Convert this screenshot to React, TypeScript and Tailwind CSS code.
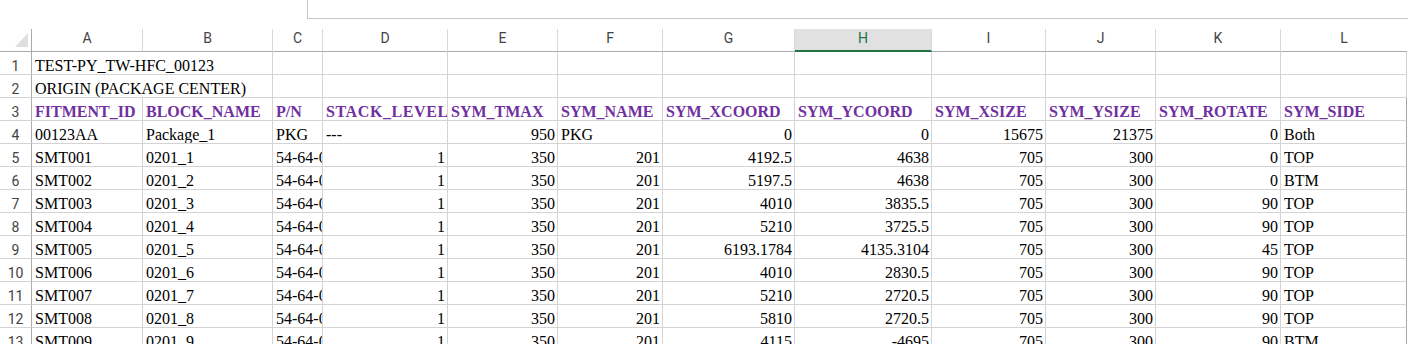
const COLS = ['A', 'B', 'C', 'D', 'E', 'F', 'G', 'H', 'I', 'J', 'K', 'L']

type Cell = { v: string; num?: boolean; span?: boolean; wide?: boolean }

const t = (v: string): Cell => ({ v })
const n = (v: string): Cell => ({ v, num: true })

const HEADERS = [
  'FITMENT_ID',
  'BLOCK_NAME',
  'P/N',
  'STACK_LEVEL',
  'SYM_TMAX',
  'SYM_NAME',
  'SYM_XCOORD',
  'SYM_YCOORD',
  'SYM_XSIZE',
  'SYM_YSIZE',
  'SYM_ROTATE',
  'SYM_SIDE',
]

const smt = (i: number, x: string, y: string, rot: string, side: string): Cell[] => [
  t(`SMT00${i}`),
  t(`0201_${i}`),
  t('54-64-0001'),
  n('1'),
  n('350'),
  n('201'),
  n(x),
  n(y),
  n('705'),
  n('300'),
  n(rot),
  t(side),
]

const ROWS: Cell[][] = [
  [{ v: 'TEST-PY_TW-HFC_00123', span: true }, ...Array(10).fill(t(''))],
  [{ v: 'ORIGIN (PACKAGE CENTER)', span: true }, ...Array(10).fill(t(''))],
  // STACK_LEVEL is a touch wider in the original font, so it gets clipped
  HEADERS.map((h) => ({ v: h, wide: h === 'STACK_LEVEL' })),
  [
    t('00123AA'),
    t('Package_1'),
    t('PKG'),
    t('---'),
    n('950'),
    t('PKG'),
    n('0'),
    n('0'),
    n('15675'),
    n('21375'),
    n('0'),
    t('Both'),
  ],
  smt(1, '4192.5', '4638', '0', 'TOP'),
  smt(2, '5197.5', '4638', '0', 'BTM'),
  smt(3, '4010', '3835.5', '90', 'TOP'),
  smt(4, '5210', '3725.5', '90', 'TOP'),
  smt(5, '6193.1784', '4135.3104', '45', 'TOP'),
  smt(6, '4010', '2830.5', '90', 'TOP'),
  smt(7, '5210', '2720.5', '90', 'TOP'),
  smt(8, '5810', '2720.5', '90', 'TOP'),
  smt(9, '4115', '-4695', '90', 'BTM'),
]

export default function App() {
  return (
    <div className="w-[1409px] h-[344px] overflow-hidden bg-white">
      {/* formula bar edge */}
      <div className="h-[29px]">
        <div className="ml-[307px] mr-[1px] h-[19px] border-l border-b border-[#c6c6c6]" />
      </div>

      <div className="grid grid-cols-[32px_111px_130px_50px_125px_110px_105px_132px_137px_114px_110px_125px_126px] font-['Liberation_Serif',serif] text-[16px] text-black">
        {/* select all corner */}
        <div className="h-[23px] border-b border-r border-[#ababab] flex justify-end items-end pr-[3px] pb-[4px]">
          <svg width="13" height="14" viewBox="0 0 13 14">
            <polygon points="13,0 13,14 0,14" fill="#dfdfdf" />
          </svg>
        </div>

        {COLS.map((c, i) => {
          const sel = c === 'H'
          return (
            <div
              key={c}
              className={
                'h-[23px] flex items-center justify-center pb-[3px] font-["Roboto",sans-serif] text-[14px] ' +
                (sel
                  ? 'bg-[#e1e1e1] text-[#217346] border-b-2 border-b-[#217346]'
                  : 'text-[#444] border-b border-b-[#ababab]') +
                (i < COLS.length - 1 ? ' border-r border-r-[#d9d9d9]' : '')
              }
            >
              {c}
            </div>
          )
        })}

        {ROWS.map((row, r) => (
          <Row key={r} index={r + 1} cells={row} />
        ))}
      </div>
    </div>
  )
}

function Row({ index, cells }: { index: number; cells: Cell[] }) {
  const head = index === 3
  return (
    <>
      <div className="h-[23px] border-b border-r border-b-[#d4d4d4] border-r-[#ababab] text-center pt-[4px] leading-[20px] font-['Roboto',sans-serif] text-[14px] text-[#444]">
        {index}
      </div>
      {cells.map((c, i) => {
        const last = i === cells.length - 1 && !c.span && cells.length === 12
        return (
          <div
            key={i}
            className={
              'h-[23px] border-b border-r border-b-[#d4d4d4] whitespace-nowrap pt-[4px] leading-[20px] ' +
              (c.span ? 'col-span-2 overflow-visible ' : 'overflow-hidden ') +
              (last ? 'border-r-[#a6a6a6] ' : 'border-r-[#d4d4d4] ') +
              (c.num ? 'text-right pr-[2px] ' : 'pl-[3px] ') +
              (c.wide ? 'tracking-[0.6px] ' : '') +
              (head ? 'font-bold text-[#7030a0]' : '')
            }
          >
            {c.v}
          </div>
        )
      })}
    </>
  )
}
